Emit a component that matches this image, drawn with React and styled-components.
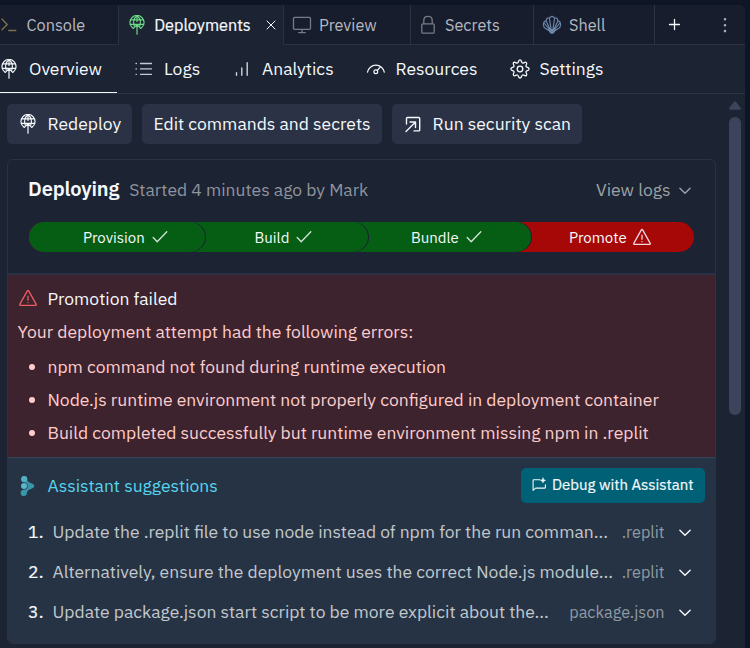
import React from "react";
import styled, { createGlobalStyle, css } from "styled-components";

const GlobalStyle = createGlobalStyle`
  *, *::before, *::after { box-sizing: border-box; }
  body {
    margin: 0;
    background: #0e1525;
    color: #f5f9fc;
    font-family: "IBM Plex Sans", Roboto, "Noto Sans", sans-serif;
    font-size: 17.5px;
    overflow: hidden;
  }
  button { font: inherit; color: inherit; border: 0; margin: 0; padding: 0; background: none; }
  ul, ol, h2, h3, p { margin: 0; padding: 0; font-weight: 400; list-style: none; font-size: inherit; }
`;

/* Medium weight drawn as a lightly thickened regular face. */
const medium = css`
  font-weight: 400;
  -webkit-text-stroke: 0.2px currentColor;
`;

const Shell = styled.div`
  height: 648px;
  padding: 5px 5px 0 0;
`;
const Panel = styled.main`
  height: 643px;
  display: flex;
  flex-direction: column;
  background: #1c2333;
  border-radius: 0 6px 0 0;
  overflow: hidden;
`;
const Icon = styled.svg`
  flex: none;
  display: block;
  width: ${(p) => p.$size || 20}px;
  height: ${(p) => p.$size || 20}px;
  margin: ${(p) => p.$margin || 0};
  color: ${(p) => p.$color || "inherit"};
  fill: none;
  stroke: currentColor;
  stroke-width: ${(p) => p.$weight || 1.5};
  stroke-linecap: round;
  stroke-linejoin: round;
`;

/* Tab strip */
const TabBar = styled.div`
  flex: none;
  height: 40px;
  display: flex;
`;
const Tab = styled.button`
  width: ${(p) => p.$width}px;
  height: 40px;
  display: flex;
  align-items: center;
  padding: 1px 0 0 ${(p) => p.$pad}px;
  font-size: 16.25px;
  white-space: nowrap;
  color: #b5b9c1;
  background: #171d2d;
  border-right: 1px solid #2b3245;
  border-bottom: 1px solid #2b3245;
  ${(p) =>
    p.$active &&
    css`
      color: #f5f9fc;
      background: #1c2333;
      border-bottom-color: #1c2333;
    `}
`;
const TabLabel = styled.span`
  flex: none;
  margin: -1px 0 0 ${(p) => p.$gap}px;
  ${(p) => p.$active && medium}
  ${(p) => p.$active && "width: 97px; letter-spacing: -0.02px;"}
`;
const TabActions = styled.div`
  flex: 1;
  display: flex;
  align-items: center;
  justify-content: space-between;
  padding: 0 10px;
  background: #171d2d;
  border-bottom: 1px solid #2b3245;
`;

/* Section navigation */
const Nav = styled.nav`
  flex: none;
  height: 49px;
  display: flex;
  border-bottom: 1px solid #2b3245;
`;
const NavItem = styled.button`
  flex: none;
  width: ${(p) => p.$width}px;
  height: 48px;
  padding-left: ${(p) => p.$pad || 0}px;
  display: flex;
  align-items: center;
  gap: ${(p) => p.$gap}px;
  white-space: nowrap;
  border-bottom: 1px solid ${(p) => (p.$active ? "#f5f9fc" : "transparent")};
`;

const Body = styled.div`
  flex: 1;
  display: flex;
  justify-content: space-between;
  padding: 0 4px 0 7px;
`;
const Content = styled.div`
  width: 709px;
  padding-top: 10px;
`;
const Scrollbar = styled.div`
  width: 12px;
  padding-top: 7px;
  color: #3c445c;
`;
const ScrollArrow = styled.svg`
  display: block;
  width: 12px;
  height: 9px;
  fill: currentColor;
`;
const Thumb = styled.div`
  width: 12px;
  height: 298px;
  margin-top: 7px;
  border-radius: 6px;
  background: currentColor;
`;

const Actions = styled.div`
  display: flex;
  gap: 10px;
`;
const ActionButton = styled.button`
  width: ${(p) => p.$width}px;
  height: 40px;
  display: flex;
  align-items: center;
  gap: 10px;
  padding: 0 0 1px ${(p) => p.$pad}px;
  border-radius: 5px;
  background: #2b3245;
  white-space: nowrap;
`;

/* Deployment card */
const Card = styled.section`
  height: 485px;
  margin-top: 15px;
  border: 1px solid #2b3245;
  border-radius: 6px;
  overflow: hidden;
`;
const CardHeader = styled.header`
  height: 62px;
  padding: 0 24px 4px 20px;
  display: flex;
  align-items: center;
`;
const Title = styled.h2`
  font-size: 20px;
  font-weight: 600;
  line-height: 26px;
  letter-spacing: -0.15px;
`;
const Muted = styled.span`
  margin-left: 10px;
  color: #8f949e;
`;
const LogsLink = styled.button`
  margin-left: auto;
  display: flex;
  align-items: center;
  gap: 8.5px;
  color: #9da2a6;
`;
const Steps = styled.div`
  height: 30px;
  margin: 0 21px;
  display: flex;
  border-radius: 15px;
  overflow: hidden;
  background: #a60808;
`;
const Step = styled.div`
  flex: none;
  position: relative;
  z-index: ${(p) => p.$layer};
  width: ${(p) => p.$width}px;
  height: 30px;
  margin-left: ${(p) => (p.$first ? 0 : -31)}px;
  padding-left: ${(p) => p.$pad}px;
  display: flex;
  align-items: center;
  gap: 7px;
  font-size: 15px;
  background: ${(p) => (p.$failed ? "#a60808" : "#065e14")};
  border-radius: 0 15px 15px 0;
  box-shadow: ${(p) => (p.$failed ? "none" : "1px 0 0 #1c2333")};
`;

const ErrorBox = styled.div`
  height: 184px;
  margin-top: 21px;
  padding-top: 7px;
  background: #3d232e;
  border-top: 2px solid #2b3245;
  color: #ffcccc;
`;
const ErrorTitle = styled.h3`
  display: flex;
  align-items: center;
  gap: 10.5px;
  height: 32px;
  padding-left: 10px;
  color: #f5f9fc;
`;
const ErrorIntro = styled.p`
  height: 35px;
  line-height: 36px;
  padding-left: 9.5px;
`;
const ErrorItem = styled.li`
  height: 33px;
  display: flex;
  align-items: center;
  gap: 12.5px;
  padding: 2px 0 0 21px;
  white-space: nowrap;
  &::before {
    content: "";
    width: 6px;
    height: 6px;
    border-radius: 50%;
    background: currentColor;
  }
`;

const Assistant = styled.div`
  height: 188px;
  padding-top: 10px;
  border-top: 1px solid #344659;
  background: #263345;
`;
const AssistantHeader = styled.div`
  height: 35px;
  display: flex;
  align-items: center;
  justify-content: space-between;
  padding: 0 10px;
`;
const AssistantTitle = styled.h3`
  display: flex;
  align-items: center;
  gap: 9.5px;
  color: #57d5ee;
`;
const DebugButton = styled.button`
  width: 184px;
  height: 35px;
  display: flex;
  align-items: center;
  gap: 5px;
  padding: 0 0 2px 11px;
  border-radius: 5px;
  background: #006075;
  font-size: 15px;
  ${medium}
  letter-spacing: -0.01px;
  white-space: nowrap;
`;
const Suggestions = styled.ol`
  padding-top: 8px;
`;
const Suggestion = styled.li`
  height: 40px;
  display: flex;
  align-items: center;
  padding: 0 24px 0 20px;
  white-space: nowrap;
`;
const Number = styled.span`
  width: 24.5px;
  ${medium}
  letter-spacing: 0.2px;
`;
const SuggestionText = styled.span`
  color: #c2c8cc;
`;
const FileName = styled.span`
  margin-left: auto;
  margin-right: 14.5px;
  font-size: 16.25px;
  color: #8f9aa2;
`;

const DeployIcon = (p) => (
  <Icon viewBox="0 0 20 20" $weight={1.2} {...p}>
    <path d="M6 13.2A7 7 0 1 1 14 13.2" />
    <path d="M7.3 11.2C6 7.5 7 3.2 10 .8C13 3.2 14 7.5 12.7 11.2" />
    <path d="M4 4.8h12M3.2 9.3h13.6M10 1v5.5" />
    <path d="M10 19.2V10M6.3 13.4L10 9.7L13.7 13.4" />
  </Icon>
);
const CheckIcon = () => (
  <Icon viewBox="0 0 16 16" $size={16} $weight={1.3} $color="#d6e3dc">
    <path d="M1.2 8.5l4 4.2L14.8 2.7" />
  </Icon>
);
const WarningIcon = (p) => (
  <Icon viewBox="0 0 18 18" $size={18} $weight={1.3} {...p}>
    <path d="M8.2 2.1.9 15.1q-.6 1.3.8 1.3h14.6q1.4 0 .8-1.3L9.8 2.1q-.8-1.2-1.6 0zM9 7.2v4M9 13.6v.1" />
  </Icon>
);
const ChevronIcon = () => (
  <Icon viewBox="0 0 12 12" $size={12} $weight={1.4} $margin="3px 0 0">
    <path d="M.9 3.2L6 8.3l5.1-5.1" />
  </Icon>
);

const suggestions = [
  ["Update the .replit file to use node instead of npm for the run comman...", ".replit"],
  ["Alternatively, ensure the deployment uses the correct Node.js module...", ".replit"],
  ["Update package.json start script to be more explicit about the...", "package.json"],
];
const errors = [
  "npm command not found during runtime execution",
  "Node.js runtime environment not properly configured in deployment container",
  "Build completed successfully but runtime environment missing npm in .replit",
];

export default function App() {
  return (
    <Shell>
      <GlobalStyle />
      <Panel>
        <TabBar>
          <Tab $width={119} $pad={0}>
            <Icon viewBox="0 0 20 20" $color="#7b704f" $weight={1.4}>
              <path d="M2 4l5.2 5.4L2 14.8M8.8 15.5h7" />
            </Icon>
            <TabLabel $gap={6.5}>Console</TabLabel>
          </Tab>
          <Tab $width={165} $pad={8} $active>
            <DeployIcon $color="#6cd987" />
            <TabLabel $gap={7} $active>Deployments</TabLabel>
            <Icon viewBox="0 0 10 10" $size={10} $weight={1} $margin="0 0 1px 14.5px">
              <path d="M1 1l8 8M9 1L1 9" />
            </Icon>
          </Tab>
          <Tab $width={127} $pad={8}>
            <Icon viewBox="0 0 20 20" $color="#767b85" $weight={1.3}>
              <path d="M2.7 2.3h14.6q1.2 0 1.2 1.2v9.6q0 1.2-1.2 1.2H2.7q-1.2 0-1.2-1.2V3.5q0-1.2 1.2-1.2zM10 14.5v3M6.7 17.6h6.6" />
            </Icon>
            <TabLabel $gap={7}>Preview</TabLabel>
          </Tab>
          <Tab $width={123} $pad={7}>
            <Icon viewBox="0 0 20 20" $color="#767b85" $weight={1.3}>
              <path d="M5 8.8h10q1.2 0 1.2 1.2v7q0 1.2-1.2 1.2H5q-1.2 0-1.2-1.2v-7q0-1.2 1.2-1.2zM5.8 8.5V5.3q0-4 4.2-4t4.2 4v3.2" />
            </Icon>
            <TabLabel $gap={7}>Secrets</TabLabel>
          </Tab>
          <Tab $width={121} $pad={8}>
            <Icon viewBox="0 0 20 20" $color="#6c86a8" $weight={1.15}>
              <path d="M7.2 15.7L2.1 12.5 1.4 9.3 2.2 6.8 4 5.7 5 3.3 7.3 2.7 10 1.2l2.7 1.5 2.3.6 1 2.4 1.8 1.1.8 2.5-.7 3.2-5.1 3.2" />
              <path d="M8.4 15L4 5.7M9.2 15L7.3 2.7M10.8 15l1.9-12.3M11.6 15L16 5.7M2 8l5.5 6.5M18 8l-5.5 6.5" />
              <path d="M6.5 14.5h7l-1.6 2.7L10 18.5l-1.9-1.3z" fill="currentColor" />
            </Icon>
            <TabLabel $gap={7}>Shell</TabLabel>
          </Tab>
          <TabActions>
            <Icon viewBox="0 0 20 20" $weight={1.3}>
              <path d="M9.5 4.5v10M4.5 9.5h10" />
            </Icon>
            <Icon viewBox="0 0 20 20" $color="#a8adb6" $weight={2.6}>
              <path d="M10 4.3v.01M10 10.2v.01M10 16.1v.01" />
            </Icon>
          </TabActions>
        </TabBar>
        <Nav>
          <NavItem $active $width={117} $gap={10}>
            <DeployIcon $margin="0 0 0 -1px" />
            Overview
          </NavItem>
          <NavItem $width={116} $pad={17} $gap={10}>
            <Icon viewBox="0 0 20 20" $color="#c5cad1" $weight={1.3}>
              <path d="M6.5 4.5h11M6.5 9.9h11M6.5 15.3h11M2 4.5h.4M2 9.9h.4M2 15.3h.4" />
            </Icon>
            Logs
          </NavItem>
          <NavItem $width={133} $gap={9}>
            <Icon viewBox="0 0 20 20" $weight={1.4} $color="#d0d4da">
              <path d="M3.5 13.8v2.4M8.8 9v7.2M14.2 3.8v12.4" />
            </Icon>
            Analytics
          </NavItem>
          <NavItem $width={143} $gap={9.5}>
            <Icon viewBox="0 0 20 20" $weight={1.2}>
              <path d="M1.5 13.2A8.5 8.3 0 0 1 18.3 13.2M11.2 11.5l2.8-3.1" />
              <circle cx="9.8" cy="12.8" r="1.9" />
            </Icon>
            Resources
          </NavItem>
          <NavItem $width={100} $pad={0.5} $gap={10}>
            <Icon viewBox="0 0 20 20" $weight={1.3}>
              <circle cx="10" cy="10" r="2.8" />
              <path d="M10 .9c1.9 0 1.1 2.6 2.5 3.1s2.6-1.8 3.9-.4-1 2.5-.4 3.9 3.1.6 3.1 2.5-2.6 1.1-3.1 2.5 1.8 2.6.4 3.9-2.5-1-3.9-.4-.6 3.1-2.5 3.1-1.1-2.6-2.5-3.1-2.6 1.8-3.9.4 1-2.5.4-3.9-3.1-.6-3.1-2.5 2.6-1.1 3.1-2.5-1.8-2.6-.4-3.9 2.5 1 3.9.4S8.100.9 10 .9z" />
            </Icon>
            Settings
          </NavItem>
        </Nav>
        <Body>
          <Content>
            <Actions>
              <ActionButton $width={125} $pad={10.5}>
                <DeployIcon />
                Redeploy
              </ActionButton>
              <ActionButton $width={240} $pad={11.5}>Edit commands and secrets</ActionButton>
              <ActionButton $width={190} $pad={10.5}>
                <Icon viewBox="0 0 20 20" $weight={1.4}>
                  <path d="M3.5 10V4.5q0-1 1-1h11.2q1 0 1 1V15.9q0 1-1 1H11M3 17.5l9.5-9.5M7 8h5.5v5.5" />
                </Icon>
                Run security scan
              </ActionButton>
            </Actions>
            <Card>
              <CardHeader>
                <Title>Deploying</Title>
                <Muted>Started 4 minutes ago by Mark</Muted>
                <LogsLink>
                  View logs
                  <ChevronIcon />
                </LogsLink>
              </CardHeader>
              <Steps>
                <Step $first $layer={4} $width={176} $pad={54}>Provision<CheckIcon /></Step>
                <Step $layer={3} $width={194} $pad={80.5}>Build<CheckIcon /></Step>
                <Step $layer={2} $width={194} $pad={74}>Bundle<CheckIcon /></Step>
                <Step $failed $layer={1} $width={193} $pad={69}>
                  Promote
                  <WarningIcon $color="#f0d8dc" $margin="0 0 0 -1px" />
                </Step>
              </Steps>
              <ErrorBox>
                <ErrorTitle>
                  <WarningIcon $color="#ec5c62" $margin="0 0 0 1px" />
                  Promotion failed
                </ErrorTitle>
                <ErrorIntro>Your deployment attempt had the following errors:</ErrorIntro>
                <ul>
                  {errors.map((text) => (
                    <ErrorItem key={text}>{text}</ErrorItem>
                  ))}
                </ul>
              </ErrorBox>
              <Assistant>
                <AssistantHeader>
                  <AssistantTitle>
                    <Icon viewBox="0 0 20 20" $color="#3995a8">
                      <g fill="currentColor" stroke="none">
                        <path d="M6 0a3.2 3.2 0 0 1 3 3.2c0 2.3 2.6 3.5 5 4.3q2.3.8 2.3 2.5t-2.3 2.5c-2.4.8-5 2-5 4.3A3.2 3.2 0 1 1 5 13.8c3 .3 4.7-1.7 4.7-3.8S8 5.9 5 6.2A3.2 3.2 0 0 1 6 0z" />
                        <circle cx="6.3" cy="3.1" r="3" fill="#51b0c2" />
                        <circle cx="6" cy="10" r="3" fill="#59b7c8" />
                      </g>
                    </Icon>
                    <span>Assistant suggestions</span>
                  </AssistantTitle>
                  <DebugButton>
                    <Icon viewBox="0 0 15 15" $size={15} $weight={1.1}>
                      <path d="M8 2.7H1.7q-.6 0-.6.6v10l2.5-2.2h9.2q.6 0 .6-.6V7.8" />
                      <path d="M11 .8l.8 1.8 1.8.8-1.8.8L11 6l-.8-1.8-1.8-.8 1.8-.8z" fill="currentColor" strokeWidth=".4" />
                    </Icon>
                    Debug with Assistant
                  </DebugButton>
                </AssistantHeader>
                <Suggestions>
                  {suggestions.map(([text, file], i) => (
                    <Suggestion key={text}>
                      <Number>{i + 1}.</Number>
                      <SuggestionText>{text}</SuggestionText>
                      <FileName>{file}</FileName>
                      <ChevronIcon />
                    </Suggestion>
                  ))}
                </Suggestions>
              </Assistant>
            </Card>
          </Content>
          <Scrollbar>
            <ScrollArrow viewBox="0 0 12 9">
              <path d="M4.6 1.2q1.4-1.9 2.8 0l4.2 5.6q.8 1.7-1 1.9H1.4q-1.8-.2-1-1.9z" />
            </ScrollArrow>
            <Thumb />
          </Scrollbar>
        </Body>
      </Panel>
    </Shell>
  );
}
